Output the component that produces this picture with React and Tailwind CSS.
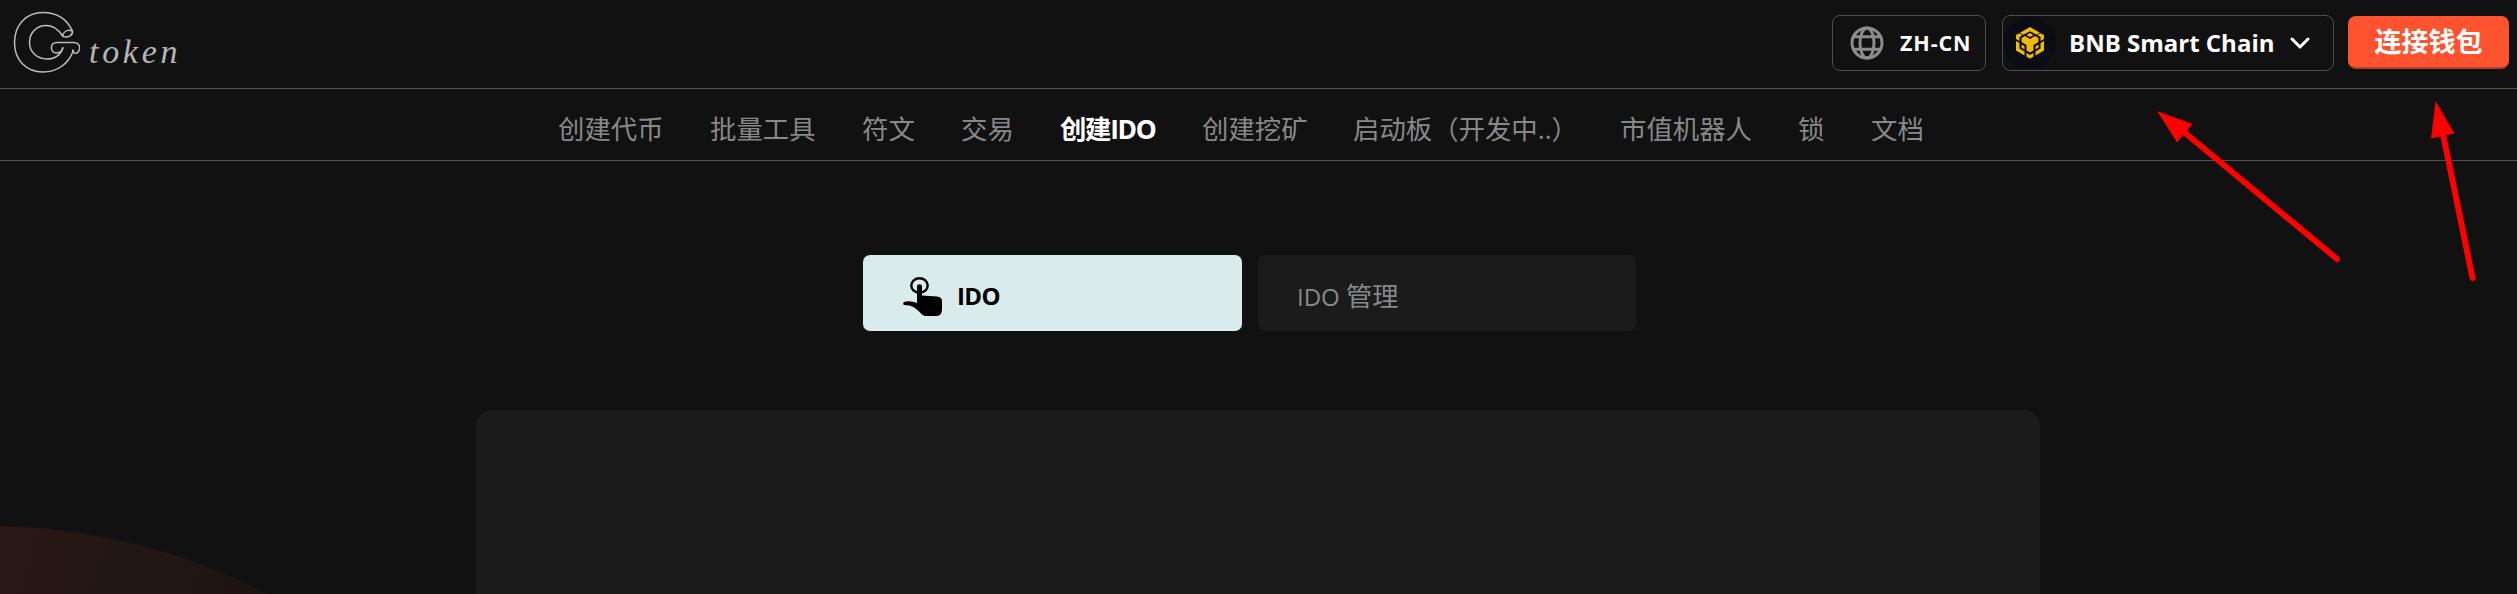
const NAV = [
  { label: "创建代币", box: "w-[152px]" },
  { label: "批量工具", box: "w-[152px]" },
  { label: "符文", box: "w-[99px]" },
  { label: "交易", box: "w-[99px]" },
  { label: "创建IDO", box: "w-[142px]", active: true },
  { label: "创建挖矿", box: "w-[151px]" },
  { label: "启动板（开发中..）", box: "w-[267px]" },
  { label: "市值机器人", box: "w-[178px]" },
  { label: "锁", box: "w-[73px]" },
  { label: "文档", box: "w-[53px]" },
];

function Logo() {
  return (
    <svg width="70" height="64" viewBox="0 0 70 64" fill="none" stroke="#bdbdbd" strokeWidth="1.500">
      <path d="M62.500 21 C56 7 44 2.500 33 2.500 C16 2.500 4.500 15 4.500 32.500 C4.500 50 16 62 33 62 C47 62 59 54 63.500 40" />
      <path d="M52.500 26 C48 18.500 42 15.500 36.500 15.500 C26 15.500 19.500 23 19.500 32.500 C19.500 42 27 49 37 49 C45 49 51.500 44.500 53 37" />
      <path d="M53 24 C55 20.500 59 19.500 62.500 21 C63 25 58.500 28 53 26.500 Z" />
      <path d="M53 38 C51 44 42.500 45 41.500 38.500 C41 34 44 32.500 47 32.500 H64 C69 32.500 70 36.500 69.500 39 C68 45 62 44 63 39.500" />
    </svg>
  );
}

function Globe() {
  return (
    <svg width="34" height="34" viewBox="0 0 34 34" fill="none" stroke="#8c8c8c" strokeWidth="3">
      <circle cx="17" cy="17" r="15" />
      <ellipse cx="17" cy="17" rx="7" ry="15" />
      <path d="M4 10.800h26M4 23.200h26" />
    </svg>
  );
}

function BnbChain() {
  return (
    <svg width="52" height="52" viewBox="0 0 52 52">
      <circle cx="26" cy="26" r="26" fill="#0b0d14" />
      <g fill="#f0b90b">
        <path d="M26 10 L36 15.700 L32.500 17.700 L26 14.200 L19.500 17.700 L16 15.700 Z" />
        <path d="M26 16 L29.500 18 L26 20 L22.500 18 Z" />
        <path d="M12 18 L15.500 16.200 L18.500 18 L15.500 20 V24 L12 22 Z" />
        <path d="M40 18 L36.500 16.200 L33.500 18 L36.500 20 V24 L40 22 Z" />
        <path d="M17.500 21 L21 19 L26 22 L31 19 L34.500 21 V25 L29.500 28 V33.500 L26 35.500 L22.500 33.500 V28 L17.500 25 Z" />
        <path d="M12 24 L15.500 26 V31.500 L20.500 34.500 V38.500 L12 33.500 Z" />
        <path d="M40 24 L36.500 26 V31.500 L31.500 34.500 V38.500 L40 33.500 Z" />
        <path d="M17.500 27.500 L20.500 29.300 V32.500 L17.500 30.500 Z" />
        <path d="M34.500 27.500 L31.500 29.300 V32.500 L34.500 30.500 Z" />
        <path d="M22.500 36 L26 38 L29.500 36 V39.500 L26 41.800 L22.500 39.500 Z" />
      </g>
    </svg>
  );
}

function TapHand() {
  return (
    <svg className="mt-2 shrink-0" width="40" height="40" viewBox="0 0 40 40">
      <ellipse cx="16.500" cy="8.500" rx="8.200" ry="7.200" fill="none" stroke="#000" strokeWidth="2.400" />
      <path
        d="M14 9.500 C14 6.500 19 6.500 19 9.500 V18.500 L34 19.500 C37.500 20 39 21.500 39 24 V32 C39 36.500 37 39 33 39 H23.500 C21 39 20 38.500 18.500 37 C15 33 11 29.500 6.500 28.500 L1 28 C0 27.500 0 25.500 1 25 C5 23.500 10 24.500 14 26 Z"
        fill="#000"
      />
    </svg>
  );
}

export default function App() {
  return (
    <div className="relative flex h-[594px] w-full flex-col overflow-hidden bg-[#111111] font-['Open_Sans','Noto_Sans_CJK_SC',sans-serif]">
      <svg className="absolute left-0 top-[500px]" width="300" height="94" viewBox="0 500 300 94">
        <defs>
          <linearGradient id="glow" gradientUnits="userSpaceOnUse" x1="0" y1="540" x2="260" y2="620">
            <stop offset="0" stopColor="#2b1816" />
            <stop offset="0.45" stopColor="#221713" />
            <stop offset="1" stopColor="#1d1413" />
          </linearGradient>
        </defs>
        <circle cx="-10" cy="1124" r="598" fill="url(#glow)" />
      </svg>

      <header className="flex h-[89px] shrink-0 items-start justify-between border-b border-[#505050] pl-[10px] pr-2">
        <div className="flex pt-[10px]">
          <Logo />
          <span className="ml-[9px] mt-[22px] font-['Liberation_Serif',serif] text-[34px] italic leading-[40px] tracking-[3.700px] text-[#b5b5b5]">
            token
          </span>
        </div>
        <div className="flex items-start pt-[15px] font-bold text-white">
          <div className="mr-4 flex h-14 w-[154px] items-center rounded-lg border border-[#4d4d4d] pl-[17px]">
            <Globe />
            <span className="-mt-px ml-4 whitespace-nowrap text-[21.500px] leading-none tracking-[0.900px]">ZH-CN</span>
          </div>
          <div className="mr-[14px] flex h-14 w-[332px] items-center rounded-lg border border-[#4d4d4d] pl-[1px]">
            <BnbChain />
            <span className="-mt-px ml-[13px] w-[221px] whitespace-nowrap text-[24px] leading-none">BNB Smart Chain</span>
            <svg width="20" height="14" viewBox="0 0 20 14" fill="none" stroke="#fff" strokeWidth="3" strokeLinecap="round" strokeLinejoin="round">
              <path d="M2 3l8 8 8-8" />
            </svg>
          </div>
          <button className="mt-px flex h-[53px] w-[161px] items-center justify-center rounded-lg border-b-2 border-[#b83c26] bg-[#ff522f] text-[27px] leading-none">
            连接钱包
          </button>
        </div>
      </header>

      <nav className="flex h-[72px] shrink-0 items-center border-b border-[#505050] pl-[558px] pt-[9px] text-[26.400px] leading-none text-[#888888]">
        {NAV.map((item) => (
          <a key={item.label} className={`${item.box} shrink-0 whitespace-nowrap ${item.active ? "font-bold tracking-[-1.300px] text-white" : ""}`}>
            {item.label}
          </a>
        ))}
      </nav>

      <main className="flex flex-1 flex-col pt-[94px]">
        <div className="flex gap-4 pl-[863px] text-[24px] leading-none">
          <div className="flex h-[76px] w-[379px] items-center rounded-[7px] bg-[#d9ebea] pl-10 font-bold text-black">
            <TapHand />
            <span className="ml-[14px] mt-[6px] tracking-[-0.600px]">IDO</span>
          </div>
          <div className="flex h-[76px] w-[378px] items-center rounded-[7px] bg-[#1b1b1b] pl-[39px] text-[#888888]">
            <span className="mt-[6px]">
              <span className="font-medium">IDO</span> <span className="text-[26.250px]">管理</span>
            </span>
          </div>
        </div>
        <section className="ml-[476px] mt-[79px] w-[1564px] flex-1 rounded-t-2xl bg-[#1b1b1b]" />
      </main>

      <svg className="absolute left-[2140px] top-[90px]" width="350" height="200" viewBox="2140 90 350 200" fill="#ff0000" stroke="#ff0000">
        <path d="M2184 132L2337 259M2443 134L2472.500 278" strokeWidth="6" strokeLinecap="round" fill="none" />
        <path d="M2157 111L2192.500 124L2177 142.500ZM2435.500 101L2454.500 133.500L2431 138.500Z" stroke="none" />
      </svg>
    </div>
  );
}
